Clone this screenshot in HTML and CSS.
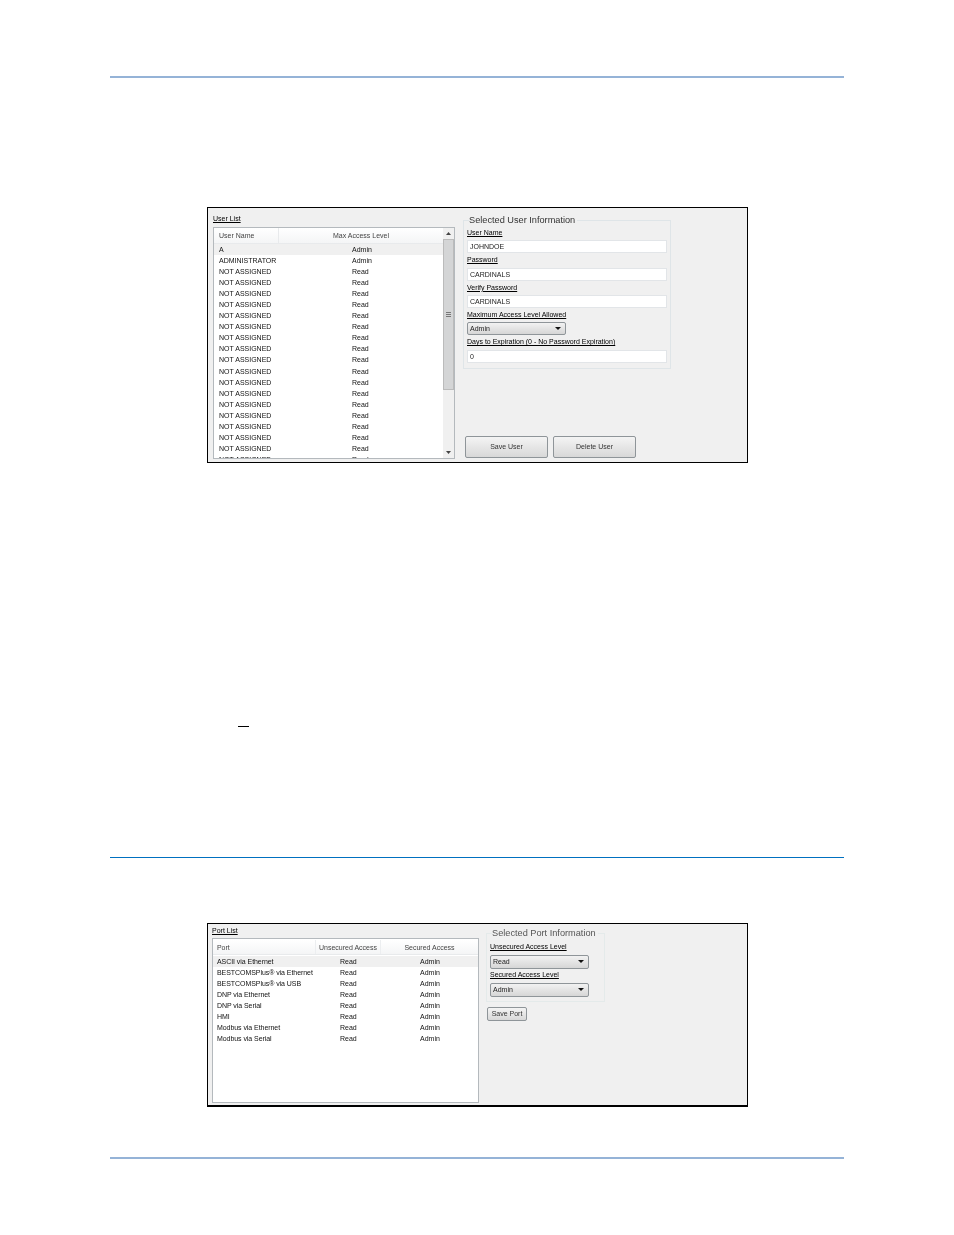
FILE: index.html
```html
<!DOCTYPE html>
<html>

  <head>
    <meta charset="utf-8">
    <title>User and port security</title>
    <link rel="stylesheet" href="styles.css">
  </head>

  <body>
    <div class="page">
      <hr class="rule rule_top">

      <!-- user list window -->
      <div class="shot shot_user">
        <div class="list_col">
          <div class="lbl list_lbl">User List</div>
          <div class="list user_list">
            <div class="scroll_area">
              <div class="row head"><span class="c_name">User Name</span><span class="c_level">Max Access Level</span></div>
              <div class="row sel"><span class="c_name">A</span><span class="c_val">Admin</span></div>
              <div class="row"><span class="c_name">ADMINISTRATOR</span><span class="c_val">Admin</span></div>
              <div class="row"><span class="c_name">NOT ASSIGNED</span><span class="c_val">Read</span></div>
              <div class="row"><span class="c_name">NOT ASSIGNED</span><span class="c_val">Read</span></div>
              <div class="row"><span class="c_name">NOT ASSIGNED</span><span class="c_val">Read</span></div>
              <div class="row"><span class="c_name">NOT ASSIGNED</span><span class="c_val">Read</span></div>
              <div class="row"><span class="c_name">NOT ASSIGNED</span><span class="c_val">Read</span></div>
              <div class="row"><span class="c_name">NOT ASSIGNED</span><span class="c_val">Read</span></div>
              <div class="row"><span class="c_name">NOT ASSIGNED</span><span class="c_val">Read</span></div>
              <div class="row"><span class="c_name">NOT ASSIGNED</span><span class="c_val">Read</span></div>
              <div class="row"><span class="c_name">NOT ASSIGNED</span><span class="c_val">Read</span></div>
              <div class="row"><span class="c_name">NOT ASSIGNED</span><span class="c_val">Read</span></div>
              <div class="row"><span class="c_name">NOT ASSIGNED</span><span class="c_val">Read</span></div>
              <div class="row"><span class="c_name">NOT ASSIGNED</span><span class="c_val">Read</span></div>
              <div class="row"><span class="c_name">NOT ASSIGNED</span><span class="c_val">Read</span></div>
              <div class="row"><span class="c_name">NOT ASSIGNED</span><span class="c_val">Read</span></div>
              <div class="row"><span class="c_name">NOT ASSIGNED</span><span class="c_val">Read</span></div>
              <div class="row"><span class="c_name">NOT ASSIGNED</span><span class="c_val">Read</span></div>
              <div class="row"><span class="c_name">NOT ASSIGNED</span><span class="c_val">Read</span></div>
              <div class="row"><span class="c_name">NOT ASSIGNED</span><span class="c_val">Read</span></div>
            </div>
            <div class="scrollbar">
              <svg class="arrow" width="11" height="11" viewBox="0 0 11 11"><path d="M3 7 L5.5 4 L8 7 Z" fill="#444"/></svg>
              <div class="thumb"><svg width="5" height="5" viewBox="0 0 5 5"><path d="M0 .5H5M0 2.5H5M0 4.5H5" stroke="#777" stroke-width="1"/></svg></div>
              <svg class="arrow arrow_end" width="11" height="11" viewBox="0 0 11 11"><path d="M3 4 L8 4 L5.5 7 Z" fill="#444"/></svg>
            </div>
          </div>
        </div>

        <div class="info_col">
          <fieldset class="group user_group">
            <legend>Selected User Information</legend>
            <div class="lbl f_lbl">User Name</div>
            <div class="field">JOHNDOE</div>
            <div class="lbl f_lbl">Password</div>
            <div class="field">CARDINALS</div>
            <div class="lbl f_lbl">Verify Password</div>
            <div class="field">CARDINALS</div>
            <div class="lbl f_lbl">Maximum Access Level Allowed</div>
            <div class="combo">Admin<i class="caret"></i></div>
            <div class="lbl f_lbl">Days to Expiration (0 - No Password Expiration)</div>
            <div class="field">0</div>
          </fieldset>
          <div class="btns">
            <div class="btn btn_big">Save User</div>
            <div class="btn btn_big">Delete User</div>
          </div>
        </div>
      </div>

      <div class="dash"></div>

      <hr class="rule_thin">

      <!-- port list window -->
      <div class="shot shot_port">
        <div class="list_col port_col">
          <div class="lbl list_lbl port_lbl">Port List</div>
          <div class="list port_list">
            <div class="row head"><span class="p_name">Port</span><span class="p_un">Unsecured Access</span><span class="p_sec">Secured Access</span></div>
            <div class="row sel"><span class="p_name">ASCII via Ethernet</span><span class="p_v1">Read</span><span class="p_v2">Admin</span></div>
            <div class="row"><span class="p_name">BESTCOMSPlus® via Ethernet</span><span class="p_v1">Read</span><span class="p_v2">Admin</span></div>
            <div class="row"><span class="p_name">BESTCOMSPlus® via USB</span><span class="p_v1">Read</span><span class="p_v2">Admin</span></div>
            <div class="row"><span class="p_name">DNP via Ethernet</span><span class="p_v1">Read</span><span class="p_v2">Admin</span></div>
            <div class="row"><span class="p_name">DNP via Serial</span><span class="p_v1">Read</span><span class="p_v2">Admin</span></div>
            <div class="row"><span class="p_name">HMI</span><span class="p_v1">Read</span><span class="p_v2">Admin</span></div>
            <div class="row"><span class="p_name">Modbus via Ethernet</span><span class="p_v1">Read</span><span class="p_v2">Admin</span></div>
            <div class="row"><span class="p_name">Modbus via Serial</span><span class="p_v1">Read</span><span class="p_v2">Admin</span></div>
          </div>
        </div>

        <div class="info_col port_info">
          <fieldset class="group port_group">
            <legend>Selected Port Information</legend>
            <div class="lbl f_lbl">Unsecured Access Level</div>
            <div class="combo">Read<i class="caret"></i></div>
            <div class="lbl f_lbl">Secured Access Level</div>
            <div class="combo">Admin<i class="caret"></i></div>
          </fieldset>
          <div class="btn btn_small">Save Port</div>
        </div>
      </div>

      <hr class="rule rule_bottom">
    </div>
  </body>

</html>
```

FILE: styles.css
```css
*{
    margin:0;
    padding:0;
    box-sizing:border-box;
}
body{
    background:#fff;
    font-family:"Liberation Sans", Arial, sans-serif;
    color:#222;
}
.page{
    width:734px;
    margin-left:110px;
    padding-top:76px;
}
.rule{
    border:0;
    height:2px;
    background:#95b3d7;
}
.rule_thin{
    border:0;
    height:1px;
    background:#0070c0;
    margin-top:130px;
}
.rule_bottom{
    margin-top:50px;
}
.dash{
    width:11px;
    height:1px;
    background:#000;
    margin:263px 0 0 128px;
}

/* screenshots */
.shot{
    display:flex;
    width:541px;
    margin-left:97px;
    background:#f0f0f0;
    border:1px solid #000;
    filter:blur(.3px);
}
.shot_user{
    height:256px;
    margin-top:129px;
    padding:6px 0 0 5px;
}
.shot_port{
    height:184px;
    margin-top:65px;
    padding:2px 0 0 4px;
    border-bottom-width:2px;
}
.lbl{
    font-size:7px;
    line-height:9px;
    text-decoration:underline;
    color:#000;
    white-space:nowrap;
}
.list_lbl{
    height:13px;
}
.port_lbl{
    height:12px;
}
.list_col{
    width:242px;
    flex:none;
}
.port_col{
    width:267px;
}
.list{
    background:#fff;
    border:1px solid #b4b9bd;
    overflow:hidden;
}
.user_list{
    display:flex;
    height:232px;
}
.port_list{
    height:165px;
    padding-top:1px;
}
.scroll_area{
    width:230px;
    overflow:hidden;
}

/* rows */
.row{
    display:flex;
    height:11.05px;
    font-size:7px;
    line-height:11px;
    white-space:nowrap;
    color:#111;
}
.row.sel{
    background:#f0f0f0;
}
.row.head{
    height:16px;
    line-height:15px;
    color:#444;
    background:linear-gradient(#fff, #f4f5f6);
    border-bottom:1px solid #e8eaec;
}
.c_name{
    width:138px;
    padding-left:5px;
}
.row.head .c_name{
    width:65px;
    border-right:1px solid #e8eaec;
}
.c_level{
    width:164px;
    text-align:center;
}
.c_val{
    width:90px;
}
.p_name{
    width:127px;
    padding-left:4px;
    letter-spacing:-.06px;
}
.row.head .p_name{
    width:103px;
    border-right:1px solid #eceef0;
}
.p_un{
    width:65px;
    text-align:center;
    border-right:1px solid #eceef0;
}
.p_sec{
    width:97px;
    text-align:center;
}
.p_v1{
    width:80px;
}
.p_v2{
    width:50px;
}
.port_list .row{
    height:11px;
}
.port_list .row.head{
    height:15px;
    margin-bottom:1px;
}

/* scrollbar */
.scrollbar{
    width:11px;
    display:flex;
    flex-direction:column;
    background:#f0f0f0;
}
.arrow{
    flex:none;
}
.thumb{
    display:flex;
    align-items:center;
    justify-content:center;
    height:151px;
    background:#d4d5d6;
    border:1px solid #bbb;
}
.arrow_end{
    margin-top:auto;
}

/* right side */
.info_col{
    display:flex;
    flex-direction:column;
    margin-left:8px;
    padding-bottom:4px;
}
.port_info{
    margin-left:7px;
    padding-bottom:0;
}
.group{
    width:208px;
    height:153.5px;
    border:1px solid #dfe5e8;
    padding:0 3px;
    margin-top:1px;
}
.group legend{
    font-size:9.2px;
    line-height:10px;
    color:#333;
    margin-left:2px;
    margin-bottom:2px;
    white-space:nowrap;
    padding-right:2px;
}
.port_group{
    width:119px;
    height:74px;
    margin-top:2px;
    border-color:#e4eaea;
}
.port_group legend{
    color:#555;
    margin-bottom:4px;
}
.f_lbl{
    padding-top:1px;
    height:13.33px;
}
.port_group .f_lbl{
    padding-top:0;
    height:13px;
}
.field{
    width:200px;
    height:13px;
    background:#fff;
    border:1px solid #e2e5e8;
    font-size:7px;
    line-height:11px;
    padding-left:2px;
    color:#222;
}
.group .field{
    margin-bottom:1px;
}
.combo{
    position:relative;
    width:99px;
    height:13px;
    border:1px solid #8f9599;
    border-radius:2px;
    background:linear-gradient(#f2f2f2, #d6d6d6);
    font-size:7px;
    line-height:12px;
    padding-left:2px;
    margin-bottom:1px;
}
.port_group .combo{
    height:14px;
}
.caret{
    position:absolute;
    right:4px;
    top:4px;
    border-left:3px solid transparent;
    border-right:3px solid transparent;
    border-top:3px solid #111;
}
.btns{
    display:flex;
    gap:5px;
    margin-top:auto;
    margin-left:2px;
}
.btn{
    border:1px solid #8f9599;
    border-radius:2px;
    background:linear-gradient(#f4f4f4, #d8d8d8);
    font-size:7px;
    text-align:center;
    color:#333;
}
.btn_big{
    width:83px;
    height:22px;
    line-height:20px;
}
.btn_small{
    width:40px;
    height:14px;
    line-height:12px;
    margin:5px 0 0 1px;
}
```
